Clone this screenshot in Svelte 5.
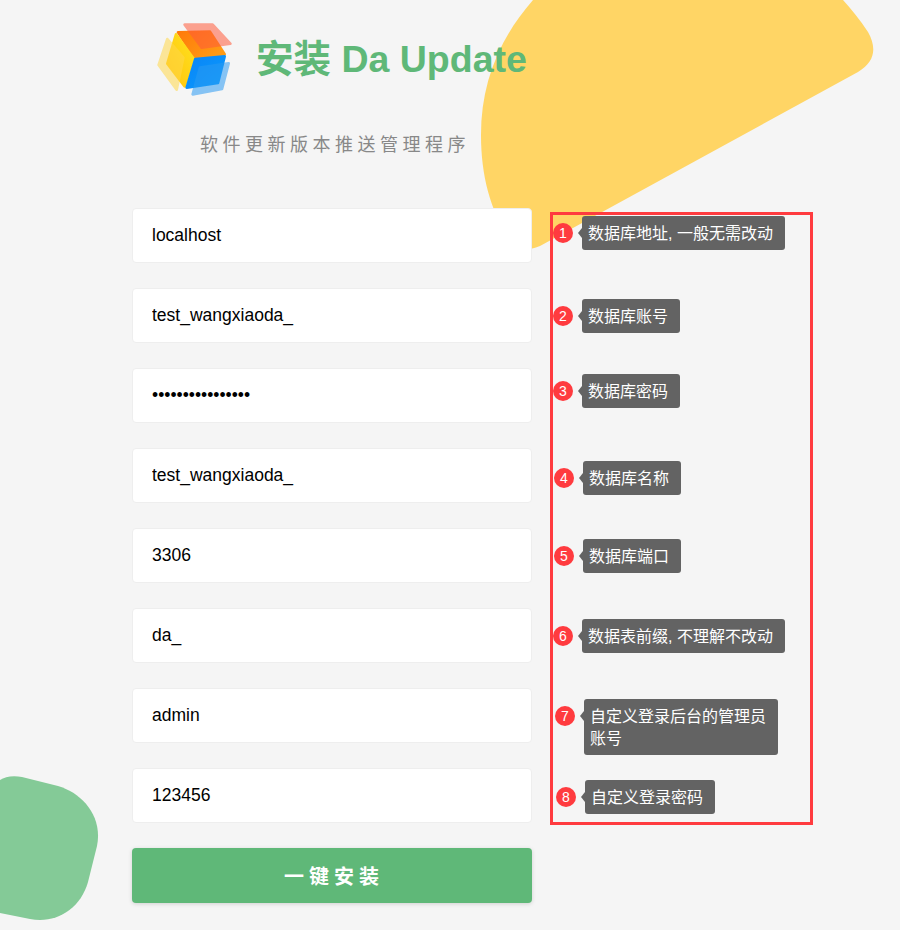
<script lang="ts">
  const fields = [
    { type: 'text', value: 'localhost' },
    { type: 'text', value: 'test_wangxiaoda_' },
    { type: 'password', value: 'test_wangxiaoda_' },
    { type: 'text', value: 'test_wangxiaoda_' },
    { type: 'text', value: '3306' },
    { type: 'text', value: 'da_' },
    { type: 'text', value: 'admin' },
    { type: 'text', value: '123456' }
  ];

  // hand placed callouts, positions are relative to the red box
  const notes = [
    { x: 0, y: 1, width: 0, text: '数据库地址, 一般无需改动' },
    { x: 0, y: 84, width: 0, text: '数据库账号' },
    { x: 0, y: 159, width: 0, text: '数据库密码' },
    { x: 1, y: 246, width: 0, text: '数据库名称' },
    { x: 1, y: 324, width: 0, text: '数据库端口' },
    { x: 0, y: 404, width: 0, text: '数据表前缀, 不理解不改动' },
    { x: 2, y: 484, width: 194, text: '自定义登录后台的管理员账号' },
    { x: 3, y: 565, width: 0, text: '自定义登录密码' }
  ];
</script>

<div class="page">
  <svg class="blob yellow" viewBox="0 0 400 260" aria-hidden="true">
    <path d="M53 0 C18 40 1 85 1 135 C1 175 10 210 30 240 C36 250 45 252 60 246 L378 72 C395 62 397 48 388 32 C380 20 372 10 363 0 Z" />
  </svg>
  <svg class="blob green" viewBox="0 0 100 160" aria-hidden="true">
    <path d="M0 6 C5 3 12 1 22 3 L58 12 C82 19 103 42 97 72 L88 108 C80 136 55 150 30 145 L0 139 Z" />
  </svg>

  <main class="install">
    <header class="brand">
      <svg class="logo" viewBox="0 0 270 270" aria-hidden="true">
        <defs>
          <linearGradient id="top" x1="0" y1="0" x2="1" y2="0.6">
            <stop offset="0" stop-color="#ff7a0a" />
            <stop offset="1" stop-color="#ff9a14" />
          </linearGradient>
          <linearGradient id="left" x1="1" y1="0" x2="0" y2="1">
            <stop offset="0" stop-color="#ffe21e" />
            <stop offset="1" stop-color="#ffc20c" />
          </linearGradient>
          <linearGradient id="right" x1="0" y1="0" x2="1" y2="1">
            <stop offset="0" stop-color="#0a84f5" />
            <stop offset="1" stop-color="#0a9cff" />
          </linearGradient>
        </defs>
        <g stroke-linejoin="round" stroke-width="8">
          <polygon points="84,52 180,50 224,118 134,128" fill="url(#top)" stroke="url(#top)" />
          <polygon points="78,58 130,130 104,214 52,146" fill="url(#left)" stroke="url(#left)" />
          <polygon points="136,132 224,124 204,204 110,218" fill="url(#right)" stroke="url(#right)" />
          <polygon class="pale" points="104,29 188,29 241,86 155,98" fill="#ff5a3a" stroke="#ff5a3a" />
          <polygon class="pale" points="52,72 100,128 80,224 26,150" fill="#ffd84a" stroke="#ffd84a" />
          <polygon class="pale" points="236,145 216,222 128,238 150,158" fill="#2a9af2" stroke="#2a9af2" />
        </g>
      </svg>
      <h1>安装 Da Update</h1>
    </header>
    <p class="tagline">软件更新版本推送管理程序</p>

    <form class="fields" onsubmit={(e) => e.preventDefault()}>
      {#each fields as field}
        <input type={field.type} value={field.value} />
      {/each}
      <button type="submit">一键安装</button>
    </form>
  </main>

  <aside class="callouts">
    {#each notes as note, i}
      <div class="note" style="left: {note.x}px; top: {note.y}px;">
        <span class="badge">{i + 1}</span>
        <span class="tip" style={note.width ? `width: ${note.width}px` : ''}>{note.text}</span>
      </div>
    {/each}
  </aside>
</div>

<style>
  :global(body) {
    background: #f5f5f5;
    font-family: "Liberation Sans", "Noto Sans CJK SC", sans-serif;
  }
  .page {
    position: relative;
    height: 930px;
    overflow: hidden;
    background: #f5f5f5;
  }
  .blob { position: absolute; display: block; }
  .blob.yellow { left: 480px; top: 0; width: 400px; height: 260px; fill: #ffd565; }
  .blob.green { left: 0; top: 774px; width: 100px; height: 160px; fill: #84ca97; }

  .install {
    position: relative;
    width: 400px;
    margin-left: 132px;
  }
  .brand {
    display: flex;
    align-items: center;
    height: 90px;
    padding-top: 15px;
    padding-left: 18px;
  }
  .logo { width: 90px; height: 90px; flex: none; filter: blur(0.5px); }
  .pale { opacity: 0.55; }
  .brand h1 {
    margin: 0 0 0 16px;
    font-size: 37.5px;
    font-weight: 700;
    line-height: 1;
    white-space: nowrap;
    color: #5fb878;
  }
  .tagline {
    margin: 28px 0 0;
    padding-left: 6px;
    text-align: center;
    font-size: 18px;
    line-height: 24px;
    letter-spacing: 4.5px;
    color: #888;
  }
  .fields {
    display: flex;
    flex-direction: column;
    gap: 25px;
    margin-top: 51px;
  }
  input {
    box-sizing: border-box;
    width: 400px;
    height: 55px;
    padding: 0 19px;
    border: 1px solid #eee;
    border-radius: 4px;
    background: #fff;
    color: #000;
    font: 17.5px "Liberation Sans", "Noto Sans CJK SC", sans-serif;
  }
  button {
    height: 55px;
    padding-left: 10px;
    border: none;
    border-radius: 4px;
    background: #5fb878;
    box-shadow: 0 1px 4px rgba(0, 0, 0, 0.15);
    color: #fff;
    font: 700 20px "Liberation Sans", "Noto Sans CJK SC", sans-serif;
    letter-spacing: 5px;
  }

  .callouts {
    position: absolute;
    left: 550px;
    top: 212px;
    box-sizing: border-box;
    width: 263px;
    height: 613px;
    border: 3px solid #ff3b3f;
  }
  .note {
    position: absolute;
    display: flex;
    align-items: flex-start;
  }
  .badge {
    flex: none;
    width: 20px;
    height: 20px;
    margin-top: 7px;
    border-radius: 50%;
    background: #ff3b3f;
    color: #fff;
    font-size: 14px;
    line-height: 20px;
    text-align: center;
  }
  .tip {
    position: relative;
    box-sizing: border-box;
    margin-left: 9px;
    padding: 7px 12px 5px 6px;
    border-radius: 3px;
    background: #636363;
    color: #fff;
    font-size: 16px;
    line-height: 22px;
    white-space: normal;
  }
  .tip::before {
    content: "";
    position: absolute;
    left: -4px;
    top: 12px;
    border-style: solid;
    border-width: 5px 4px 5px 0;
    border-color: transparent #636363 transparent transparent;
  }
</style>
